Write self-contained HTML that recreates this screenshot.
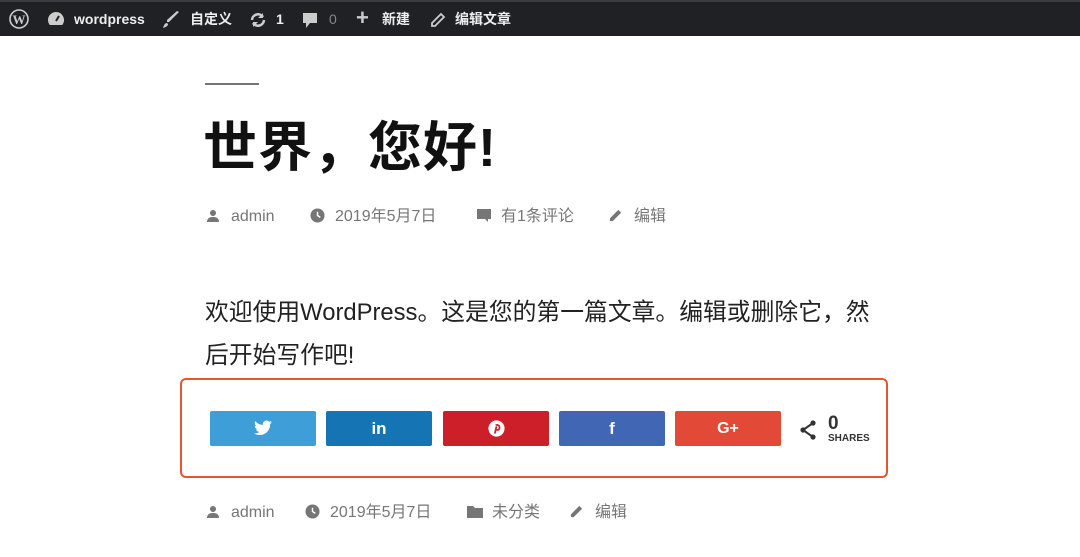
<!DOCTYPE html>
<html><head><meta charset="utf-8"><style>
*{margin:0;padding:0;box-sizing:border-box}
body{width:1080px;height:557px;background:#fff;font-family:"Liberation Sans","Noto Sans CJK SC",sans-serif;position:relative;overflow:hidden}
.bar{position:absolute;left:0;top:0;width:1080px;height:36px;background:#1f2125;border-top:2px solid #3a3c40;color:#eee;font-size:14px}
.bar span{position:absolute;top:8px;line-height:18px;white-space:nowrap}
.abs{position:absolute;white-space:nowrap}
.meta{color:#767676;font-size:16px}
.meta span{line-height:20px}
.meta svg{position:absolute}
.btn{position:absolute;top:411px;width:106px;height:35px;border-radius:2px;color:#fff;font-weight:bold;font-size:17px;text-align:center;line-height:35px}
</style></head><body>
<div class="bar">
<svg style="position:absolute;left:9px;top:7px" width="20" height="20" viewBox="0 0 20 20"><circle cx="10" cy="10" r="9" fill="none" stroke="#ccc" stroke-width="1.6"/><text x="10" y="15" font-size="13" font-family="Liberation Serif" font-weight="bold" fill="#ccc" text-anchor="middle">W</text></svg>
<svg style="position:absolute;left:47px;top:9px" width="18" height="16" viewBox="0 0 18 16"><path d="M9 1a8 8 0 0 0-8 8c0 2 .7 3.6 1.8 5h12.4A8 8 0 0 0 9 1z" fill="#ccc"/><path d="M9 10l3-5" stroke="#1f2125" stroke-width="2"/></svg>
<span style="left:74px;font-weight:bold">wordpress</span>
<svg style="position:absolute;left:162px;top:9px" width="18" height="18" viewBox="0 0 18 18"><path d="M17 1L7 11l-2 0 0-2L15 0z M5 12c-2 0-3 2-4 5 3-1 5-2 5-4z" fill="#ccc"/></svg>
<span style="left:190px;font-weight:bold">自定义</span>
<svg style="position:absolute;left:249px;top:9px" width="18" height="18" viewBox="0 0 18 18"><path d="M3 9a6 6 0 0 1 11-3M15 9a6 6 0 0 1-11 3" fill="none" stroke="#ccc" stroke-width="2.5"/><path d="M14 2v5h-5zM4 16v-5h5z" fill="#ccc"/></svg>
<span style="left:276px;font-weight:bold">1</span>
<svg style="position:absolute;left:302px;top:10px" width="16" height="17" viewBox="0 0 16 17"><path d="M1 1h14v10H8l-4 5v-5H1z" fill="#ccc"/></svg>
<span style="left:329px;color:#888">0</span>
<span style="left:356px;top:4px;font-size:22px;line-height:24px;font-weight:bold;color:#ccc">+</span>
<span style="left:382px;font-weight:bold">新建</span>
<svg style="position:absolute;left:430px;top:10px" width="16" height="16" viewBox="0 0 16 16"><path d="M11 2l3 3-9 9H2v-3z" fill="none" stroke="#ccc" stroke-width="1.8"/></svg>
<span style="left:455px;font-weight:bold">编辑文章</span>
</div>
<div class="abs" style="left:205px;top:83px;width:54px;height:2px;background:#767676"></div>
<div class="abs" style="left:203px;top:115px;font-size:54px;line-height:66px;font-weight:bold;color:#111;letter-spacing:1px">世界，您好!</div>
<div class="meta">
<svg style="left:207px;top:209px" width="12" height="14" viewBox="0 0 12 14"><circle cx="6" cy="4" r="3" fill="#767676"/><path d="M0 13c0-4 3-5 6-5s6 1 6 5z" fill="#767676"/></svg>
<span class="abs" style="left:231px;top:207px">admin</span>
<svg style="left:310px;top:208px" width="15" height="15" viewBox="0 0 16 16"><circle cx="8" cy="8" r="7.5" fill="#767676"/><path d="M8 4v4l3 2" stroke="#fff" stroke-width="1.5" fill="none"/></svg>
<span class="abs" style="left:335px;top:207px">2019年5月7日</span>
<svg style="left:476px;top:208px" width="16" height="15" viewBox="0 0 16 15"><path d="M1 1h14v10h-3v3l-3-3H1z" fill="#767676"/></svg>
<span class="abs" style="left:501px;top:207px">有1条评论</span>
<svg style="left:608px;top:208px" width="15" height="15" viewBox="0 0 16 16"><path d="M11 2l3 3-9 9H2v-3z" fill="#767676"/></svg>
<span class="abs" style="left:634px;top:207px">编辑</span>
</div>
<div class="abs" style="left:205px;top:291px;font-size:23.8px;color:#222;line-height:43px">欢迎使用WordPress。这是您的第一篇文章。编辑或删除它，然<br>后开始写作吧!</div>
<div class="abs" style="left:180px;top:378px;width:708px;height:100px;border:2px solid #e4572e;border-radius:6px"></div>
<div class="btn" style="left:210px;background:#3d9ed8">
<svg style="margin-top:9px" width="18" height="16" viewBox="0 0 24 20"><path d="M24 2.4a10 10 0 0 1-2.8.8A5 5 0 0 0 23.3.5a10 10 0 0 1-3.1 1.2A4.9 4.9 0 0 0 11.8 6 14 14 0 0 1 1.7.9a4.9 4.9 0 0 0 1.5 6.6A4.9 4.9 0 0 1 1 6.9a4.9 4.9 0 0 0 3.9 4.8 5 5 0 0 1-2.200.1 4.9 4.9 0 0 0 4.6 3.4A9.9 9.9 0 0 1 0 17.2 14 14 0 0 0 7.5 19.4c9.1 0 14-7.5 14-14v-.6A10 10 0 0 0 24 2.4z" fill="#fff"/></svg></div>
<div class="btn" style="left:326px;background:#1474b4">in</div>
<div class="btn" style="left:443px;background:#cd1f2a">
<svg style="margin-top:9px" width="17" height="17" viewBox="0 0 20 20"><circle cx="10" cy="10" r="9.5" fill="#fff"/><path d="M9 6c3-1 5 1 4.5 3.5S11 12 10 11.5M10 7.5L8 16" stroke="#cd1f2a" stroke-width="2" fill="none"/></svg></div>
<div class="btn" style="left:559px;background:#4167b4">f</div>
<div class="btn" style="left:675px;background:#e24a37;font-size:16px">G+</div>
<svg style="position:absolute;left:799px;top:420px" width="18" height="20" viewBox="0 0 18 20"><path d="M14 3L4 10l10 7" stroke="#333" stroke-width="2" fill="none"/><circle cx="14" cy="3" r="2.6" fill="#333"/><circle cx="4" cy="10" r="2.6" fill="#333"/><circle cx="14" cy="17" r="2.6" fill="#333"/></svg>
<div class="abs" style="left:828px;top:413px;font-size:19px;font-weight:bold;color:#333">0</div>
<div class="abs" style="left:828px;top:433px;font-size:10px;font-weight:bold;color:#333">SHARES</div>
<div class="meta">
<svg style="left:207px;top:505px" width="12" height="14" viewBox="0 0 12 14"><circle cx="6" cy="4" r="3" fill="#767676"/><path d="M0 13c0-4 3-5 6-5s6 1 6 5z" fill="#767676"/></svg>
<span class="abs" style="left:231px;top:503px">admin</span>
<svg style="left:305px;top:504px" width="15" height="15" viewBox="0 0 16 16"><circle cx="8" cy="8" r="7.5" fill="#767676"/><path d="M8 4v4l3 2" stroke="#fff" stroke-width="1.5" fill="none"/></svg>
<span class="abs" style="left:330px;top:503px">2019年5月7日</span>
<svg style="left:467px;top:505px" width="16" height="13" viewBox="0 0 16 13"><path d="M0 1h6l2 2h8v10H0z" fill="#767676"/></svg>
<span class="abs" style="left:492px;top:503px">未分类</span>
<svg style="left:569px;top:504px" width="15" height="15" viewBox="0 0 16 16"><path d="M11 2l3 3-9 9H2v-3z" fill="#767676"/></svg>
<span class="abs" style="left:595px;top:503px">编辑</span>
</div>
</body></html>
